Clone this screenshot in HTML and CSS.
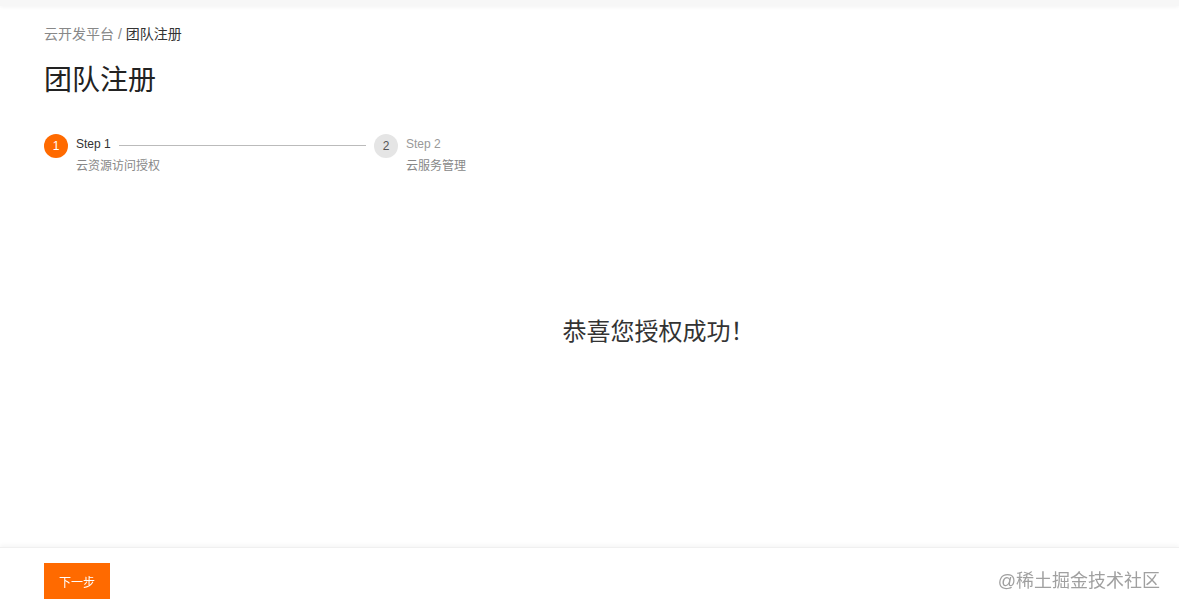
FILE: index.html
```html
<!DOCTYPE html>
<html lang="zh-CN">
<head>
    <meta charset="UTF-8">
    <meta name="viewport" content="width=device-width, initial-scale=1.0">
    <title>团队注册</title>
    <link rel="stylesheet" href="styles.css">
</head>
<body>
    <div class="top-bar"></div>

    <div class="page">
        <div class="breadcrumb">
            <span class="crumb">云开发平台</span>
            <span class="sep">/</span>
            <span class="crumb current">团队注册</span>
        </div>

        <h1 class="page-title">团队注册</h1>

        <div class="steps">
            <div class="step step-active">
                <div class="step-icon">1</div>
                <div class="step-body">
                    <div class="step-title">
                        <span>Step 1</span>
                        <i class="step-tail"></i>
                    </div>
                    <div class="step-desc">云资源访问授权</div>
                </div>
            </div>
            <div class="step step-wait">
                <div class="step-icon">2</div>
                <div class="step-body">
                    <div class="step-title"><span>Step 2</span></div>
                    <div class="step-desc">云服务管理</div>
                </div>
            </div>
        </div>

        <div class="result">恭喜您授权成功！</div>
    </div>

    <div class="footer">
        <button class="btn-primary">下一步</button>
        <span class="watermark">@稀土掘金技术社区</span>
    </div>
</body>
</html>
```

FILE: styles.css
```css
body {
    margin: 0;
    font-family: "Liberation Sans", Arial, "Noto Sans CJK SC", sans-serif;
    background: #fff;
    color: #333;
}
.top-bar {
    height: 6px;
    background: #f7f7f7;
    box-shadow: 0 1px 4px rgba(0, 0, 0, 0.05);
}
.page {
    padding: 0 44px;
}
.breadcrumb {
    margin-top: 18px;
    font-size: 14px;
    line-height: 20px;
    color: #888;
}
.breadcrumb .current {
    color: #333;
}
.page-title {
    margin: 17px 0 0;
    font-size: 28px;
    line-height: 40px;
    font-weight: normal;
    color: #222;
}
.steps {
    display: flex;
    margin-top: 33px;
}
.step {
    display: flex;
}
.step-active {
    width: 330px;
}
.step-icon {
    width: 24px;
    height: 24px;
    border-radius: 50%;
    flex: none;
    display: flex;
    align-items: center;
    justify-content: center;
    font-size: 12px;
    margin-right: 8px;
}
.step-active .step-icon {
    background: #ff6a00;
    color: #fff;
}
.step-wait .step-icon {
    background: #e5e5e5;
    color: #555;
}
.step-body {
    flex: 1;
}
.step-title {
    display: flex;
    align-items: center;
    height: 20px;
    font-size: 12px;
    color: #333;
}
.step-wait .step-title {
    color: #999;
}
.step-tail {
    flex: 1;
    height: 1px;
    background: #bbb;
    margin: 2px 8px 0;
}
.step-desc {
    font-size: 12px;
    line-height: 24px;
    color: #888;
}
.result {
    margin-top: 138px;
    padding-left: 138px;
    text-align: center;
    font-size: 24px;
    line-height: 32px;
    color: #333;
}
.footer {
    position: fixed;
    left: 0;
    right: 0;
    bottom: 0;
    height: 60px;
    padding: 0 19px 0 44px;
    display: flex;
    align-items: center;
    justify-content: space-between;
    background: #fff;
    border-top: 1px solid #f0f0f0;
    box-shadow: 0 -2px 4px rgba(0, 0, 0, 0.04);
}
.btn-primary {
    width: 66px;
    height: 36px;
    border: none;
    background: #ff6a00;
    color: #fff;
    font-family: inherit;
    font-size: 12px;
    cursor: pointer;
    margin-top: 6px;
}
.watermark {
    font-size: 18px;
    color: #a0a0a0;
    margin-top: 2px;
}
```
